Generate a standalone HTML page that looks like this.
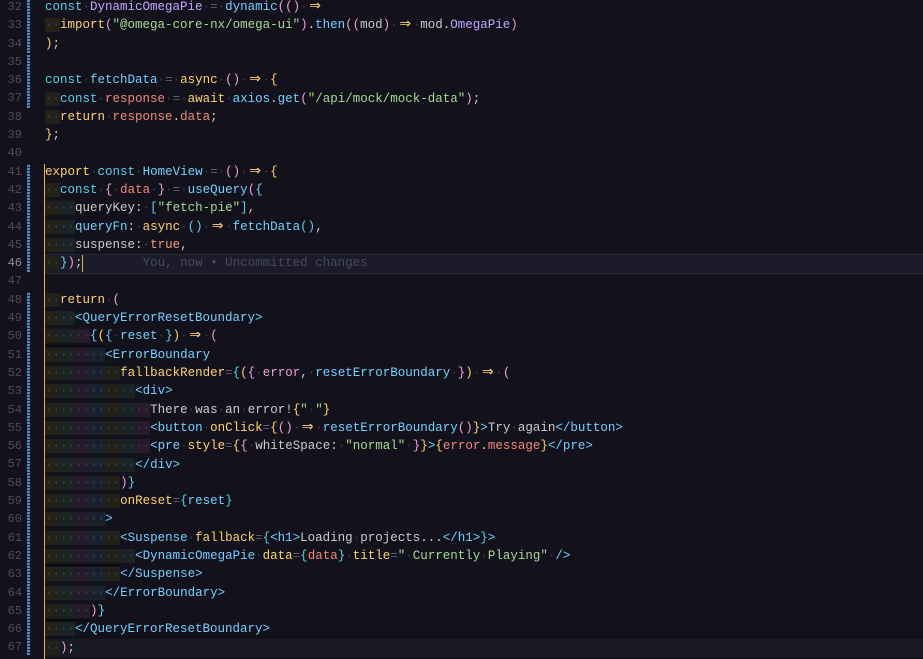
<!DOCTYPE html>
<html><head><meta charset="utf-8"><style>
body{margin:0;background:#13121c;width:923px;height:659px;overflow:hidden;font-family:"Liberation Mono",monospace;font-size:12.5px;}
.ln{position:absolute;left:0;width:22px;text-align:right;color:#4a4d5c;font-size:12px}
.row{position:absolute;left:45px;white-space:pre;height:18.3px;line-height:18.3px;color:#cbccc6}
.g{position:absolute;left:27px;width:3px;background:repeating-linear-gradient(0deg,#4c8ac0 0 2px,#1d3550 2px 3px)}
.d{color:#3d404e}
.u1{background:#22221a}.u2{background:#1a2424}.u3{background:#271b2c}.u4{background:#1a2230}
.k{color:#5ccfe6}.p{color:#c3a6ff}.f{color:#73d0ff}.y{color:#ffd173}.s{color:#a6da95}.v{color:#f28779}.o{color:#f29e74}.w{color:#cbccc6}.t{color:#73d0ff}.tp{color:#5ccfe6}.a{color:#ffd173}.pk{color:#f29ed8}.ar{color:#ffd173;display:inline-block;width:15px;text-align:center;font-family:"DejaVu Sans",sans-serif;font-size:14px;line-height:10px}
.op{color:#5c6070}
.hl{position:absolute;left:45px;height:1px;background:#000;opacity:.6}
</style></head><body>
<div class="g" style="top:0;height:53px"></div>
<div class="g" style="top:55px;height:53px"></div>
<div class="g" style="top:164px;height:108px"></div>
<div class="g" style="top:292px;height:363px"></div>
<div style="position:absolute;left:44px;top:164px;width:1px;height:495px;background:#e6b450"></div>
<div style="position:absolute;left:45px;top:254px;width:878px;height:18px;background:#1c1b29;border-top:1px solid #26253a;border-bottom:1px solid #26253a"></div>
<div style="position:absolute;left:82px;top:255px;width:1px;height:17px;background:#e6b450"></div>
<div class="hl" style="top:345px;width:60px"></div>
<div class="hl" style="top:565px;width:75px"></div>
<div class="hl" style="top:620px;width:45px"></div>
<div style="position:absolute;left:0;top:0">
<div class="ln" style="top:-2px;line-height:18.3px">32<br>33<br>34<br>35<br>36<br>37<br>38<br>39<br>40<br>41<br>42<br>43<br>44<br>45<br><span style="color:#8a8c99">46</span><br>47<br>48<br>49<br>50<br>51<br>52<br>53<br>54<br>55<br>56<br>57<br>58<br>59<br>60<br>61<br>62<br>63<br>64<br>65<br>66<br>67</div>
</div>
<div class="row" style="top:-2px"><span class="k">const</span><span class="d">·</span><span class="p">DynamicOmegaPie</span><span class="d">·</span><span class="op">=</span><span class="d">·</span><span class="f">dynamic</span><span class="pk">((</span><span class="pk">)</span><span class="d">·</span><span class="ar">⇒</span></div>
<div class="row" style="top:16.3px"><span class="u1 d">··</span><span class="y">import</span><span class="pk">(</span><span class="s">"@omega-core-nx/omega-ui"</span><span class="pk">)</span>.<span class="f">then</span><span class="pk">((</span><span class="w">mod</span><span class="pk">)</span><span class="d">·</span><span class="ar">⇒</span><span class="d">·</span>mod.<span class="p">OmegaPie</span><span class="pk">)</span></div>
<div class="row" style="top:34.6px"><span class="y">)</span>;</div>
<div class="row" style="top:71.2px"><span class="k">const</span><span class="d">·</span><span class="f">fetchData</span><span class="d">·</span><span class="op">=</span><span class="d">·</span><span class="y">async</span><span class="d">·</span><span class="pk">()</span><span class="d">·</span><span class="ar">⇒</span><span class="d">·</span><span class="y">{</span></div>
<div class="row" style="top:89.5px"><span class="u1 d">··</span><span class="k">const</span><span class="d">·</span><span class="v">response</span><span class="d">·</span><span class="op">=</span><span class="d">·</span><span class="y">await</span><span class="d">·</span><span class="f">axios</span>.<span class="f">get</span><span class="pk">(</span><span class="s">"/api/mock/mock-data"</span><span class="pk">)</span>;</div>
<div class="row" style="top:107.8px"><span class="u1 d">··</span><span class="y">return</span><span class="d">·</span><span class="v">response</span>.<span class="v">data</span>;</div>
<div class="row" style="top:126.1px"><span class="y">}</span>;</div>
<div class="row" style="top:162.7px"><span class="y">export</span><span class="d">·</span><span class="k">const</span><span class="d">·</span><span class="f">HomeView</span><span class="d">·</span><span class="op">=</span><span class="d">·</span><span class="pk">()</span><span class="d">·</span><span class="ar">⇒</span><span class="d">·</span><span class="y">{</span></div>
<div class="row" style="top:181px"><span class="u1 d">··</span><span class="k">const</span><span class="d">·</span><span class="pk">{</span><span class="d">·</span><span class="v">data</span><span class="d">·</span><span class="pk">}</span><span class="d">·</span><span class="op">=</span><span class="d">·</span><span class="f">useQuery</span><span class="pk">(</span><span class="f">{</span></div>
<div class="row" style="top:199.3px"><span class="u1 d">··</span><span class="u2 d">··</span>queryKey:<span class="d">·</span><span class="tp">[</span><span class="s">"fetch-pie"</span><span class="tp">]</span>,</div>
<div class="row" style="top:217.6px"><span class="u1 d">··</span><span class="u2 d">··</span><span class="f">queryFn</span>:<span class="d">·</span><span class="y">async</span><span class="d">·</span><span class="tp">()</span><span class="d">·</span><span class="ar">⇒</span><span class="d">·</span><span class="f">fetchData</span><span class="tp">()</span>,</div>
<div class="row" style="top:235.9px"><span class="u1 d">··</span><span class="u2 d">··</span>suspense:<span class="d">·</span><span class="o">true</span>,</div>
<div class="row" style="top:254.2px"><span class="u1 d">··</span><span class="f">}</span><span class="pk">)</span>;<span style="color:#474a5a">        You, now • Uncommitted changes</span></div>
<div class="row" style="top:290.8px"><span class="u1 d">··</span><span class="y">return</span><span class="d">·</span><span class="pk">(</span></div>
<div class="row" style="top:309.1px"><span class="u1 d">··</span><span class="u2 d">··</span><span class="t">&lt;QueryErrorResetBoundary&gt;</span></div>
<div class="row" style="top:327.4px"><span class="u1 d">··</span><span class="u2 d">··</span><span class="u3 d">··</span><span class="f">{</span><span class="y">(</span><span class="tp">{</span><span class="d">·</span><span class="f">reset</span><span class="d">·</span><span class="tp">}</span><span class="y">)</span><span class="d">·</span><span class="ar">⇒</span><span class="d">·</span><span class="pk">(</span></div>
<div class="row" style="top:345.7px"><span class="u1 d">··</span><span class="u2 d">··</span><span class="u3 d">··</span><span class="u4 d">··</span><span class="t">&lt;ErrorBoundary</span></div>
<div class="row" style="top:364px"><span class="u1 d">··</span><span class="u2 d">··</span><span class="u3 d">··</span><span class="u4 d">··</span><span class="u1 d">··</span><span class="a">fallbackRender</span><span class="op">=</span><span class="tp">{</span><span class="y">(</span><span class="pk">{</span><span class="d">·</span><span class="pk">error</span>,<span class="d">·</span><span class="f">resetErrorBoundary</span><span class="d">·</span><span class="pk">}</span><span class="y">)</span><span class="d">·</span><span class="ar">⇒</span><span class="d">·</span><span class="pk">(</span></div>
<div class="row" style="top:382.3px"><span class="u1 d">··</span><span class="u2 d">··</span><span class="u3 d">··</span><span class="u4 d">··</span><span class="u1 d">··</span><span class="u2 d">··</span><span class="t">&lt;div&gt;</span></div>
<div class="row" style="top:400.6px"><span class="u1 d">··</span><span class="u2 d">··</span><span class="u3 d">··</span><span class="u4 d">··</span><span class="u1 d">··</span><span class="u2 d">··</span><span class="u3 d">··</span>There<span class="d">·</span>was<span class="d">·</span>an<span class="d">·</span>error!<span class="y">{</span><span class="s">"<span class="d">·</span>"</span><span class="y">}</span></div>
<div class="row" style="top:418.9px"><span class="u1 d">··</span><span class="u2 d">··</span><span class="u3 d">··</span><span class="u4 d">··</span><span class="u1 d">··</span><span class="u2 d">··</span><span class="u3 d">··</span><span class="t">&lt;button</span><span class="d">·</span><span class="a">onClick</span><span class="op">=</span><span class="y">{</span><span class="pk">()</span><span class="d">·</span><span class="ar">⇒</span><span class="d">·</span><span class="f">resetErrorBoundary</span><span class="pk">()</span><span class="y">}</span><span class="t">&gt;</span>Try<span class="d">·</span>again<span class="t">&lt;/button&gt;</span></div>
<div class="row" style="top:437.2px"><span class="u1 d">··</span><span class="u2 d">··</span><span class="u3 d">··</span><span class="u4 d">··</span><span class="u1 d">··</span><span class="u2 d">··</span><span class="u3 d">··</span><span class="t">&lt;pre</span><span class="d">·</span><span class="a">style</span><span class="op">=</span><span class="y">{</span><span class="pk">{</span><span class="d">·</span>whiteSpace:<span class="d">·</span><span class="s">"normal"</span><span class="d">·</span><span class="pk">}</span><span class="y">}</span><span class="t">&gt;</span><span class="y">{</span><span class="v">error</span>.<span class="v">message</span><span class="y">}</span><span class="t">&lt;/pre&gt;</span></div>
<div class="row" style="top:455.5px"><span class="u1 d">··</span><span class="u2 d">··</span><span class="u3 d">··</span><span class="u4 d">··</span><span class="u1 d">··</span><span class="u2 d">··</span><span class="t">&lt;/div&gt;</span></div>
<div class="row" style="top:473.8px"><span class="u1 d">··</span><span class="u2 d">··</span><span class="u3 d">··</span><span class="u4 d">··</span><span class="u1 d">··</span><span class="pk">)</span><span class="tp">}</span></div>
<div class="row" style="top:492.1px"><span class="u1 d">··</span><span class="u2 d">··</span><span class="u3 d">··</span><span class="u4 d">··</span><span class="u1 d">··</span><span class="a">onReset</span><span class="op">=</span><span class="tp">{</span><span class="f">reset</span><span class="tp">}</span></div>
<div class="row" style="top:510.4px"><span class="u1 d">··</span><span class="u2 d">··</span><span class="u3 d">··</span><span class="u4 d">··</span><span class="t">&gt;</span></div>
<div class="row" style="top:528.7px"><span class="u1 d">··</span><span class="u2 d">··</span><span class="u3 d">··</span><span class="u4 d">··</span><span class="u1 d">··</span><span class="t">&lt;Suspense</span><span class="d">·</span><span class="a">fallback</span><span class="op">=</span><span class="tp">{</span><span class="t">&lt;h1&gt;</span>Loading<span class="d">·</span>projects...<span class="t">&lt;/h1&gt;</span><span class="tp">}</span><span class="t">&gt;</span></div>
<div class="row" style="top:547px"><span class="u1 d">··</span><span class="u2 d">··</span><span class="u3 d">··</span><span class="u4 d">··</span><span class="u1 d">··</span><span class="u2 d">··</span><span class="t">&lt;DynamicOmegaPie</span><span class="d">·</span><span class="a">data</span><span class="op">=</span><span class="tp">{</span><span class="v">data</span><span class="tp">}</span><span class="d">·</span><span class="a">title</span><span class="op">=</span><span class="s">"<span class="d">·</span>Currently<span class="d">·</span>Playing"</span><span class="d">·</span><span class="t">/&gt;</span></div>
<div class="row" style="top:565.3px"><span class="u1 d">··</span><span class="u2 d">··</span><span class="u3 d">··</span><span class="u4 d">··</span><span class="u1 d">··</span><span class="t">&lt;/Suspense&gt;</span></div>
<div class="row" style="top:583.6px"><span class="u1 d">··</span><span class="u2 d">··</span><span class="u3 d">··</span><span class="u4 d">··</span><span class="t">&lt;/ErrorBoundary&gt;</span></div>
<div class="row" style="top:601.9px"><span class="u1 d">··</span><span class="u2 d">··</span><span class="u3 d">··</span><span class="pk">)</span><span class="f">}</span></div>
<div class="row" style="top:620.2px"><span class="u1 d">··</span><span class="u2 d">··</span><span class="t">&lt;/QueryErrorResetBoundary&gt;</span></div>
<div class="row" style="top:638.5px;width:878px;background:#1a1926"><span class="u1 d">··</span><span class="pk">)</span>;</div>
</body></html>
